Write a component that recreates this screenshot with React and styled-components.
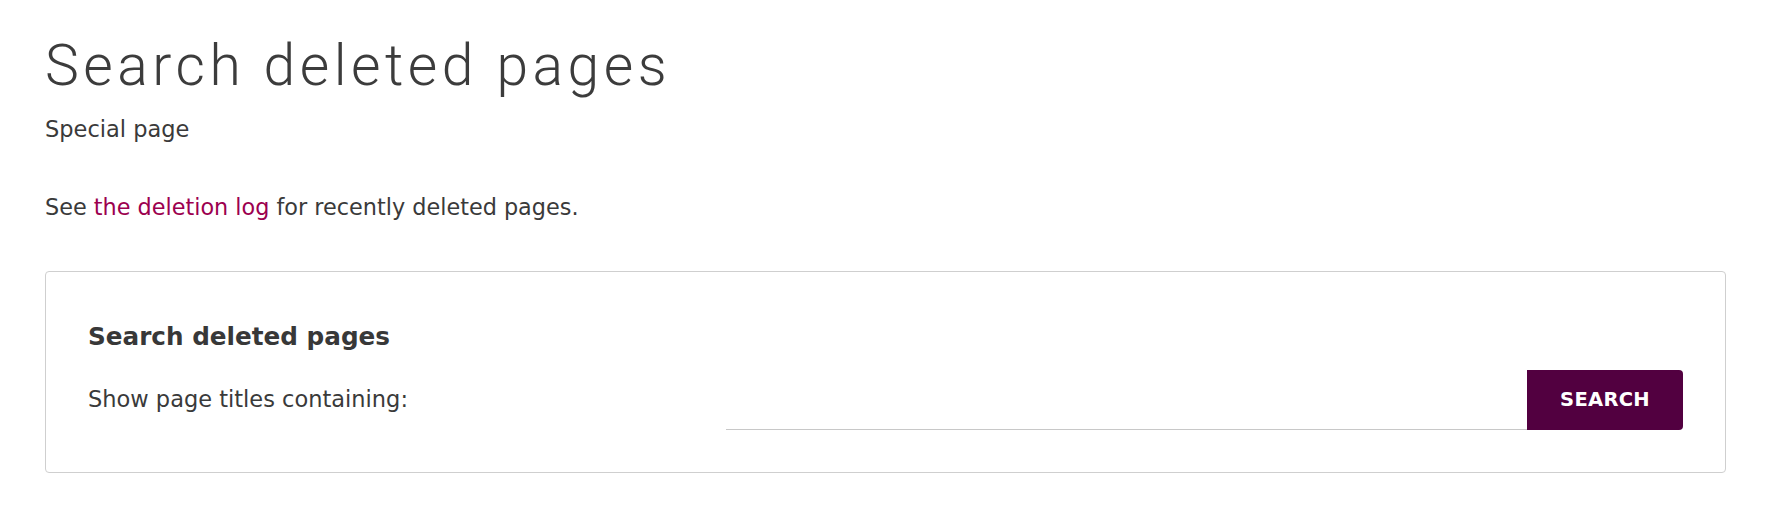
import React from "react";
import styled, { createGlobalStyle } from "styled-components";

const GlobalStyle = createGlobalStyle`
  html, body {
    margin: 0;
    padding: 0;
    background: #ffffff;
  }
  body {
    font-family: "DejaVu Sans", "Liberation Sans", sans-serif;
    color: #3a3a3a;
  }
`;

const Page = styled.main`
  padding: 31px 46px 40px 45px;
`;

const Title = styled.h1`
  margin: 0;
  font-family: Roboto, "Liberation Sans", sans-serif;
  font-weight: 300;
  font-size: 57px;
  line-height: 70px;
  letter-spacing: 4.5px;
  color: #3c3c3c;
`;

const Subtitle = styled.div`
  margin-top: 13px;
  font-size: 22.5px;
  line-height: 30px;
  color: #3a3a3a;
`;

const Intro = styled.p`
  margin: 48px 0 0;
  font-size: 22.35px;
  line-height: 30px;
  color: #3a3a3a;
`;

const Link = styled.a`
  color: #9c004f;
  text-decoration: none;
`;

const Panel = styled.form`
  margin-top: 49px;
  border: 1px solid #cfcfcf;
  border-radius: 4px;
  padding: 50px 42px 42px;
`;

const Legend = styled.h2`
  margin: 0;
  font-size: 24.7px;
  line-height: 30px;
  font-weight: 700;
  color: #383838;
`;

const Row = styled.div`
  margin-top: 18px;
  display: grid;
  grid-template-columns: 40% 1fr auto;
  align-items: start;
`;

const Label = styled.label`
  padding-top: 14px;
  font-size: 22.5px;
  line-height: 30px;
  color: #3a3a3a;
`;

const Input = styled.input`
  box-sizing: border-box;
  height: 60px;
  width: 100%;
  border: none;
  border-bottom: 1px solid #c8c8c8;
  background: transparent;
  font: inherit;
  font-size: 22px;
  outline: none;
  padding: 0 8px;
`;

const Button = styled.button`
  box-sizing: border-box;
  width: 156px;
  height: 60px;
  border: none;
  border-radius: 0 4px 4px 0;
  background: #520040;
  color: #ffffff;
  font-family: "DejaVu Sans", "Liberation Sans", sans-serif;
  font-weight: 700;
  font-size: 19.5px;
  letter-spacing: 0.3px;
  line-height: 1;
  text-transform: uppercase;
  display: flex;
  align-items: center;
  justify-content: center;
  cursor: pointer;
`;

export default function App() {
  return (
    <>
      <GlobalStyle />
      <Page>
        <Title>Search deleted pages</Title>
        <Subtitle>Special page</Subtitle>
        <Intro>
          See <Link href="#">the deletion log</Link> for recently deleted pages.
        </Intro>
        <Panel onSubmit={(e) => e.preventDefault()}>
          <Legend>Search deleted pages</Legend>
          <Row>
            <Label htmlFor="prefix">Show page titles containing:</Label>
            <Input id="prefix" type="text" />
            <Button type="submit">Search</Button>
          </Row>
        </Panel>
      </Page>
    </>
  );
}
